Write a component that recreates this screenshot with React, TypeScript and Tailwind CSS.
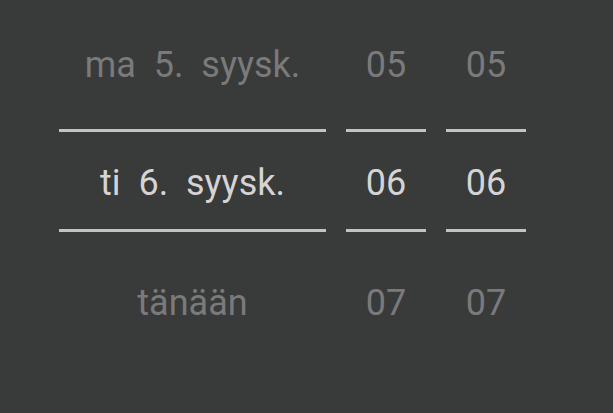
const font = { fontFamily: "Roboto, 'Noto Sans', sans-serif" }

interface PickerColumnProps {
  prev: string
  current: string
  next: string
  width: string
}

function PickerColumn({ prev, current, next, width }: PickerColumnProps) {
  return (
    <div className={`flex flex-col ${width}`}>
      <div className="h-[129px] flex items-center justify-center text-[36px] text-[#7a7a7a] whitespace-pre leading-none">
        {prev}
      </div>
      <div className="h-[3px] bg-[#c3c3c3]" />
      <div className="h-[97px] pt-[5px] flex items-center justify-center text-[36px] text-[#d4d4d4] whitespace-pre leading-none">
        {current}
      </div>
      <div className="h-[3px] bg-[#c3c3c3]" />
      <div className="h-[142px] flex items-center justify-center text-[36px] text-[#7a7a7a] whitespace-pre leading-none">
        {next}
      </div>
    </div>
  )
}

export default function App() {
  return (
    <div className="w-[613px] h-[413px] bg-[#393a3a] overflow-hidden" style={font}>
      <div className="flex gap-5 pl-[59px]">
        <PickerColumn prev={"ma  5.  syysk."} current={"ti  6.  syysk."} next="tänään" width="w-[267px]" />
        <PickerColumn prev="05" current="06" next="07" width="w-[80px]" />
        <PickerColumn prev="05" current="06" next="07" width="w-[80px]" />
      </div>
    </div>
  )
}
